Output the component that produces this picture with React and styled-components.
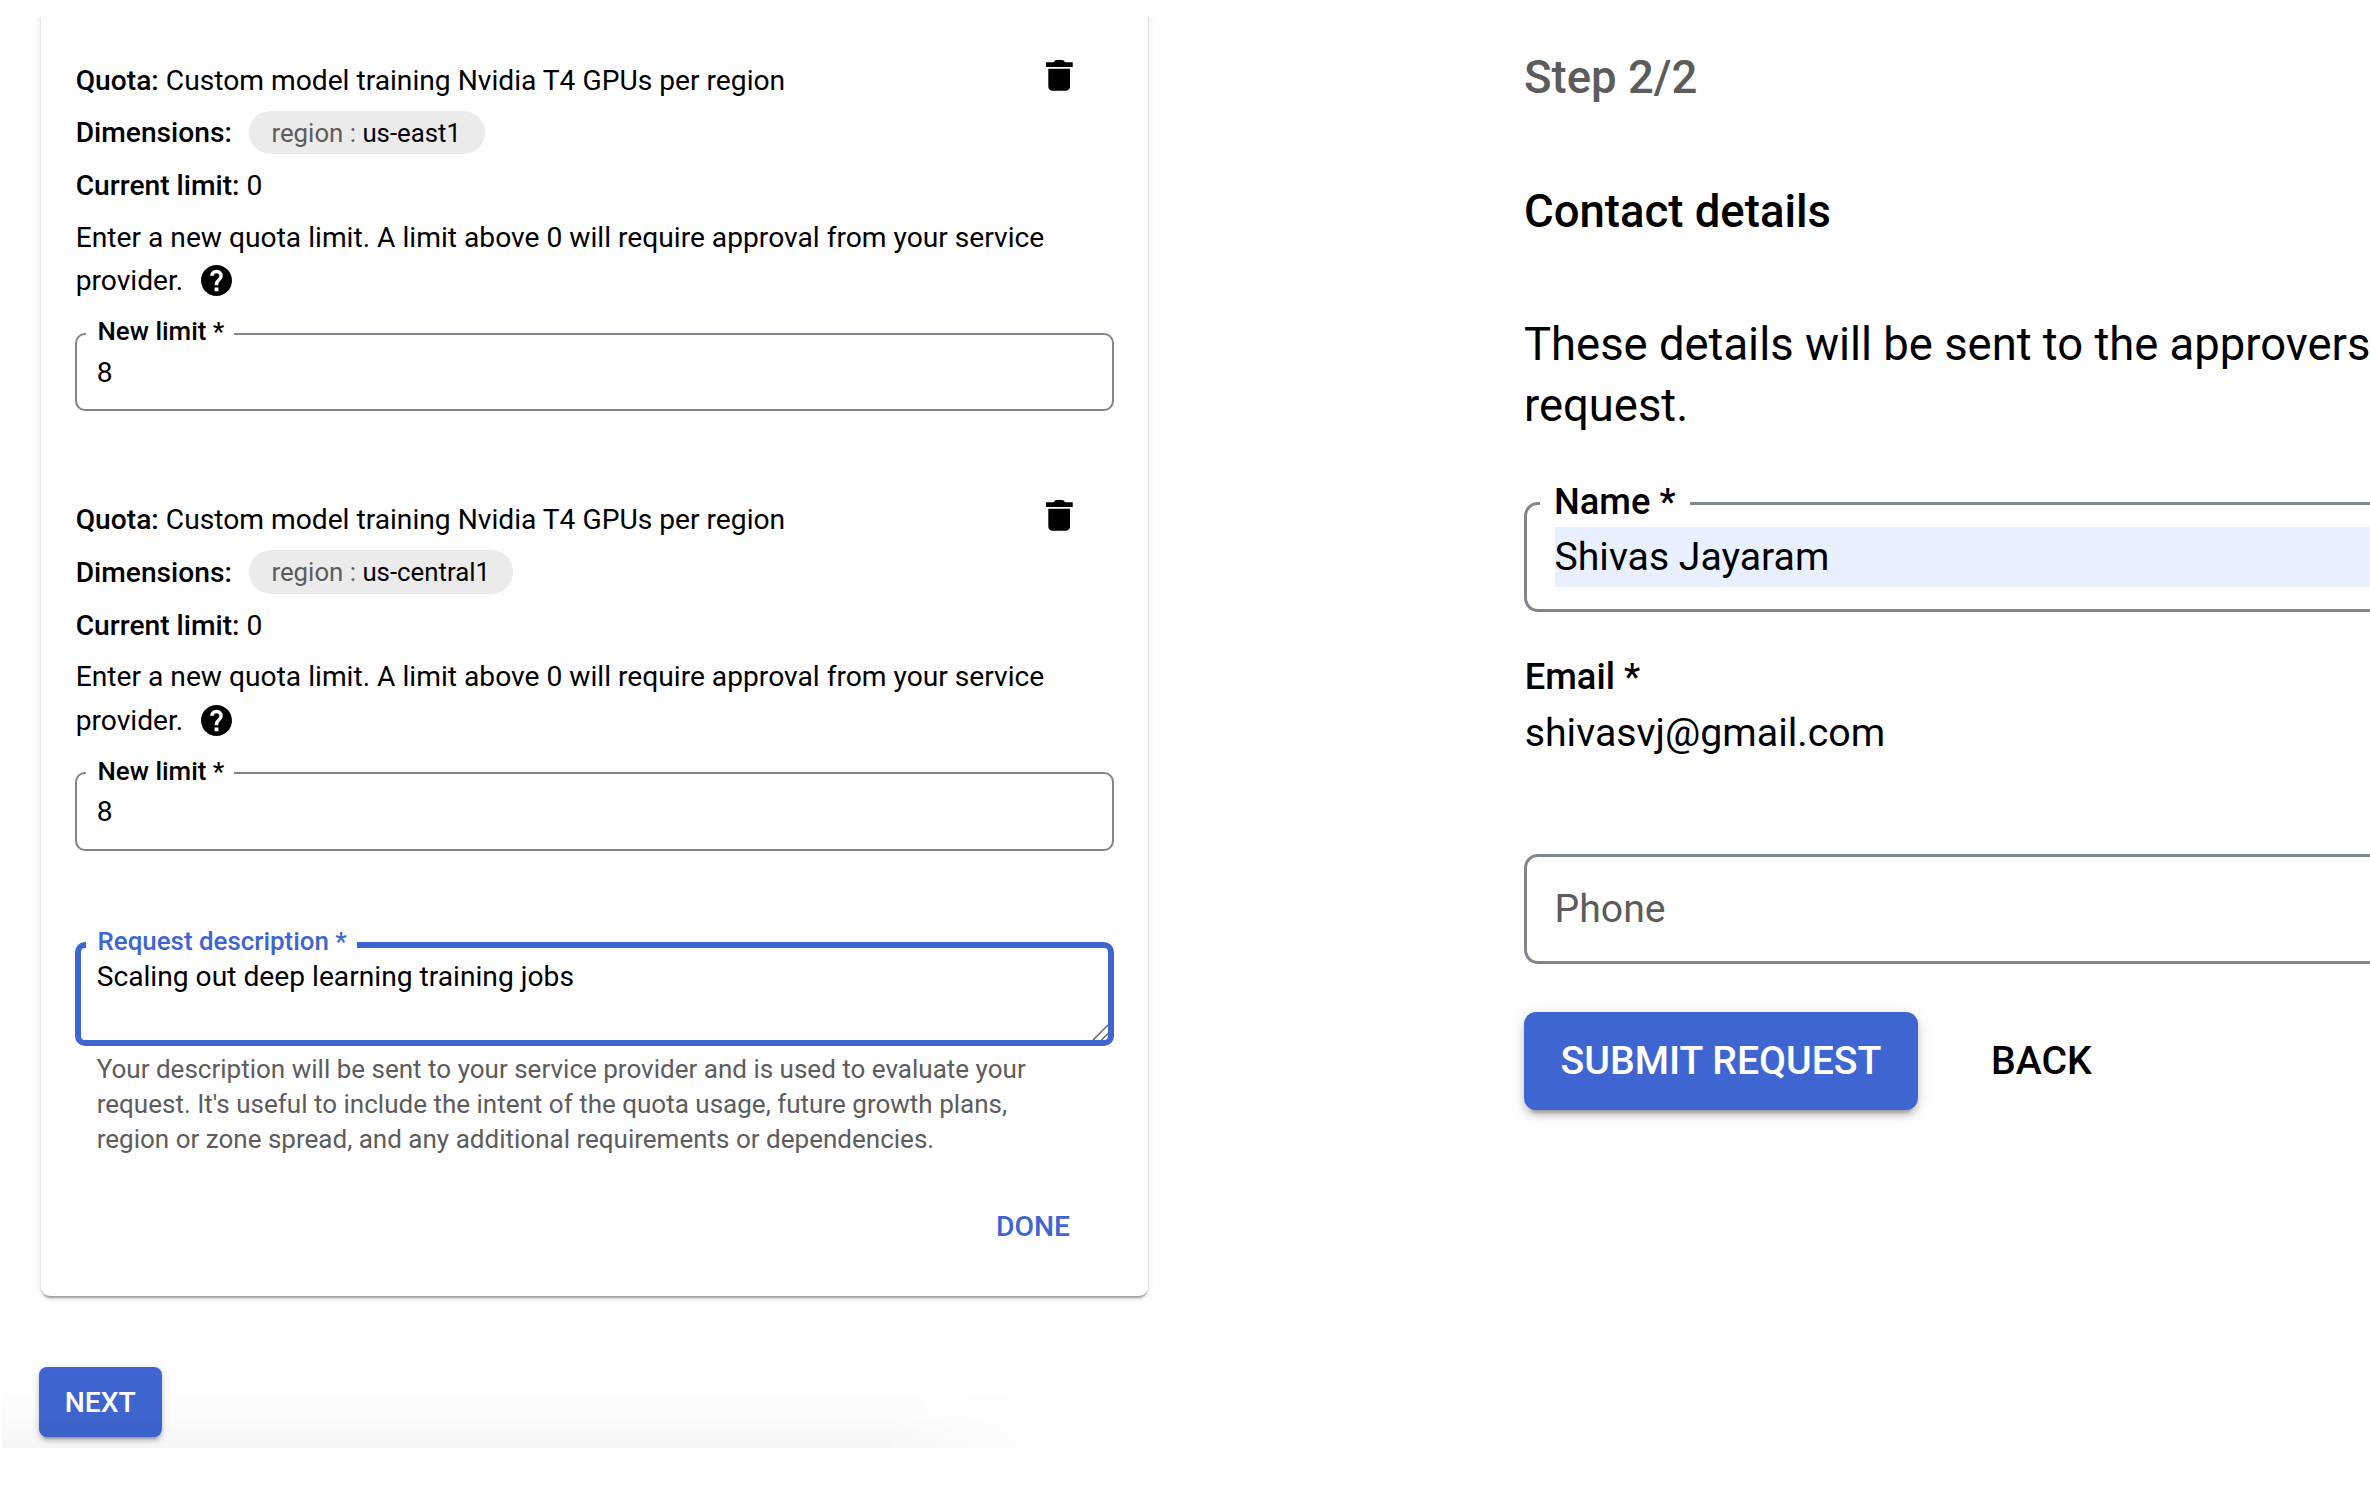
import React from "react";
import styled, { createGlobalStyle } from "styled-components";

const BLUE = "#3f66d0";
const GREY = "#5c5c5c";
const OUTLINE = "#80868b";
const SURFACE = "#fefefe";

const GlobalStyle = createGlobalStyle`
  * { box-sizing: border-box; }
  html, body { margin: 0; padding: 0; background: ${SURFACE}; }
  body { font-family: Roboto, "Liberation Sans", sans-serif; color: #000; overflow: hidden; }
  p, h2 { margin: 0; }
  button { font-family: inherit; border: 0; padding: 0; margin: 0; }
`;

const Page = styled.main`
  display: flex;
  width: 2370px;
  height: 1486px;
  overflow: hidden;
  background: ${SURFACE};
`;

const QuotaPanel = styled.section`
  position: relative;
  flex: none;
  width: 1198px;
  height: 1431px;
  margin: 17px 0 0 2px;
  padding-left: 39px;
  overflow: hidden;

  &::after {
    content: "";
    position: absolute;
    inset: auto 0 0 0;
    height: 84px;
    background: linear-gradient(to top, rgba(0, 0, 0, 0.034), rgba(0, 0, 0, 0.012) 36%, rgba(0, 0, 0, 0.003) 70%, transparent);
    mask-image: linear-gradient(to right, #000 880px, transparent 1050px);
    pointer-events: none;
  }
`;

const Card = styled.div`
  width: 1107px;
  height: 1299px;
  margin-top: -20px;
  padding: 57px 34px 0;
  border-radius: 0 0 9px 9px;
  background: ${SURFACE};
  box-shadow:
    0 4px 2px -2px rgba(0, 0, 0, 0.2),
    0 2px 2px 0 rgba(0, 0, 0, 0.14),
    0 2px 6px 0 rgba(0, 0, 0, 0.12);
`;

const QuotaBlock = styled.article`
  height: 439.7px;
  font-size: 28.2px;
`;

const Row = styled.div`
  display: flex;
  align-items: center;
  height: 52.4px;
  padding: ${(p) => (p.$low ? "1px" : "0")} 0 0 0.7px;
  white-space: pre;
`;

const Strong = styled.span`
  font-weight: 500;
`;

const DeleteButton = styled.button`
  display: flex;
  margin: -9px 41px 0 auto;
  background: none;
`;

const Chip = styled.span`
  display: flex;
  align-items: center;
  height: 43.6px;
  margin-left: 17.5px;
  padding: 0 23.5px 0 22px;
  border-radius: 22px;
  background: #ebebeb;
  font-size: 25.8px;
`;

const ChipKey = styled.span`
  color: ${GREY};
`;

const Hint = styled.p`
  display: flex;
  flex-direction: column;
  margin: 4.6px 0 30px 0.7px;
  line-height: 43.4px;
  white-space: pre;
`;

const HintTail = styled.span`
  display: flex;
  align-items: center;
  gap: 11px;
`;

const Field = styled.div`
  position: relative;
  display: flex;
  align-items: ${(p) => (p.$top ? "flex-start" : "center")};
  height: ${(p) => p.$height}px;
  padding: ${(p) => p.$pad};
  border: ${(p) => (p.$focused ? `6.5px solid ${BLUE}` : `${p.$line || 2}px solid ${OUTLINE}`)};
  border-radius: ${(p) => p.$radius || 10}px;
  font-size: ${(p) => p.$size || 28.2}px;
  white-space: nowrap;
`;

const FloatLabel = styled.span`
  position: absolute;
  left: ${(p) => p.$left}px;
  top: ${(p) => p.$top}px;
  padding: 0 ${(p) => p.$gap || 10}px 0 ${(p) => p.$gapLeft || 11.5}px;
  background: ${SURFACE};
  color: ${(p) => p.$color || "#000"};
  font-size: ${(p) => p.$size || 25.9}px;
  font-weight: 500;
  line-height: 1.1;
`;

const ResizeGrip = styled.svg`
  position: absolute;
  right: 0;
  bottom: 0;
`;

const DescriptionSlot = styled.div`
  margin-top: 8.5px;
`;

const Helper = styled.p`
  margin: 6.6px 0 49.9px 21.7px;
  color: ${GREY};
  font-size: 26.02px;
  line-height: 34.75px;
  white-space: nowrap;
`;

const CardActions = styled.div`
  display: flex;
  justify-content: flex-end;
  padding-right: 44px;
`;

const TextButton = styled.button`
  background: none;
  color: ${(p) => p.$color || "#000"};
  font-size: ${(p) => p.$size}px;
  font-weight: 500;
  line-height: 40px;
`;

const FilledButton = styled.button`
  width: ${(p) => p.$width}px;
  height: ${(p) => p.$height}px;
  border-radius: ${(p) => p.$radius}px;
  background: ${BLUE};
  color: #fff;
  font-size: ${(p) => p.$size}px;
  font-weight: 500;
  white-space: nowrap;
  box-shadow:
    0 ${(p) => 3 * p.$depth}px ${(p) => p.$depth}px ${(p) => -2 * p.$depth}px rgba(0, 0, 0, 0.2),
    0 ${(p) => 2 * p.$depth}px ${(p) => 2 * p.$depth}px 0 rgba(0, 0, 0, 0.14),
    0 ${(p) => p.$depth}px ${(p) => 5 * p.$depth}px 0 rgba(0, 0, 0, 0.12);
`;

const NextRow = styled.div`
  margin: 71px 0 0 -2px;
`;

const ContactPanel = styled.section`
  flex: none;
  width: 846px;
  margin-left: 324px;
  padding-top: 48px;
`;

const StepText = styled.p`
  color: ${GREY};
  font-size: 45.5px;
  font-weight: 500;
  line-height: 60px;
`;

const Heading = styled.h2`
  margin-top: 74px;
  font-size: 45.5px;
  font-weight: 500;
  line-height: 60px;
`;

const Lead = styled.p`
  margin: 73px 0 65px;
  font-size: 45.4px;
  line-height: 60.8px;
  white-space: nowrap;
`;

const ContactField = styled(Field)`
  width: 900px;
`;

const Autofill = styled.span`
  flex: 1;
  height: 60px;
  background: #e8effd;
  line-height: 61px;
`;

const EmailLabel = styled.p`
  margin: 43px 0 0 0.7px;
  font-size: 36.3px;
  font-weight: 500;
  line-height: 43px;
`;

const EmailValue = styled.p`
  margin: 7.5px 0 93px 0.7px;
  font-size: 39.3px;
  line-height: 56px;
`;

const Placeholder = styled.span`
  color: ${GREY};
`;

const ContactActions = styled.div`
  display: flex;
  align-items: center;
  gap: 73px;
  margin-top: 48px;
`;

const TrashIcon = () => (
  <svg width="27" height="31" viewBox="0 0 27 31" aria-hidden="true">
    <path d="M0 2.200h7.600Q9 0 10.500 0h5.700Q17.700 0 19.100 2.200H26.700V7H0z M2.300 8.800h21.700v17.700a4.300 4.300 0 0 1-4.300 4.300H6.600A4.300 4.300 0 0 1 2.300 26.500z" />
  </svg>
);

const HelpIcon = () => (
  <svg width="31" height="31" viewBox="2 2 20 20" aria-hidden="true">
    <path d="M12 2C6.48 2 2 6.48 2 12s4.480 10 10 10 10-4.480 10-10S17.520 2 12 2zm1.250 17h-2.500v-2.500h2.500V19zm1.900-7.600-.9.920C13.450 13.100 13.150 13.700 13.150 15h-2.300v-.5c0-1.100.45-2.100 1.170-2.830l1.240-1.260c.37-.36.590-.86.590-1.410 0-1-.85-1.750-1.850-1.750S10.150 8 10.150 9H7.900c0-2.210 1.850-4 4.100-4s4.100 1.790 4.100 4c0 .88-.36 1.720-.95 2.400z" />
  </svg>
);

function Quota({ region }) {
  return (
    <QuotaBlock>
      <Row>
        <span><Strong>Quota:</Strong> Custom model training Nvidia T4 GPUs per region</span>
        <DeleteButton aria-label="Delete"><TrashIcon /></DeleteButton>
      </Row>
      <Row>
        <Strong>Dimensions:</Strong>
        <Chip><ChipKey>region : </ChipKey><span>{region}</span></Chip>
      </Row>
      <Row $low>
        <span><Strong>Current limit:</Strong> 0</span>
      </Row>
      <Hint>
        <span>Enter a new quota limit. A limit above 0 will require approval from your service</span>
        <HintTail>provider. <HelpIcon /></HintTail>
      </Hint>
      <Field $height={78.4} $pad="1px 19.7px 0">
        <FloatLabel $left={9} $top={-17.4}>New limit *</FloatLabel>
        8
      </Field>
    </QuotaBlock>
  );
}

export default function App() {
  return (
    <>
      <GlobalStyle />
      <Page>
        <QuotaPanel>
          <Card>
            <Quota region="us-east1" />
            <Quota region="us-central1" />
            <DescriptionSlot>
              <Field $height={104} $pad="12px 15.7px" $focused $top>
                <FloatLabel $left={5} $top={-21} $color={BLUE}>Request description *</FloatLabel>
                Scaling out deep learning training jobs
                <ResizeGrip width="16" height="16" viewBox="0 0 16 16">
                  <path d="M1 16 16 1M9.500 16 16 9.500" stroke="#666" strokeWidth="1.500" fill="none" />
                </ResizeGrip>
              </Field>
            </DescriptionSlot>
            <Helper>
              Your description will be sent to your service provider and is used to evaluate your<br />
              request. It's useful to include the intent of the quota usage, future growth plans,<br />
              region or zone spread, and any additional requirements or dependencies.
            </Helper>
            <CardActions>
              <TextButton $color={BLUE} $size={28.3}>DONE</TextButton>
            </CardActions>
          </Card>
          <NextRow>
            <FilledButton $width={122.5} $height={70} $radius={8} $size={28.3} $depth={2}>NEXT</FilledButton>
          </NextRow>
        </QuotaPanel>
        <ContactPanel>
          <StepText>Step 2/2</StepText>
          <Heading>Contact details</Heading>
          <Lead>These details will be sent to the approvers<br />request.</Lead>
          <ContactField $height={110} $pad="0 0 0 27.5px" $line={3} $radius={14} $size={39.2}>
            <FloatLabel $left={13} $top={-23} $size={36.3} $gap={14} $gapLeft={14}>Name *</FloatLabel>
            <Autofill>Shivas Jayaram</Autofill>
          </ContactField>
          <EmailLabel>Email *</EmailLabel>
          <EmailValue>shivasvj@gmail.com</EmailValue>
          <ContactField $height={110} $pad="0 27.5px" $line={3} $radius={14} $size={39.2}>
            <Placeholder>Phone</Placeholder>
          </ContactField>
          <ContactActions>
            <FilledButton $width={394} $height={97.5} $radius={12} $size={39.2} $depth={3}>SUBMIT REQUEST</FilledButton>
            <TextButton $size={39.2}>BACK</TextButton>
          </ContactActions>
        </ContactPanel>
      </Page>
    </>
  );
}
